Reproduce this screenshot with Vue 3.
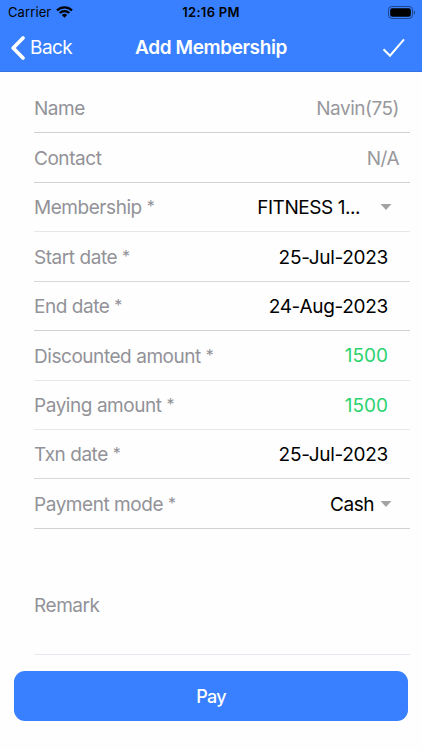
<script setup>
const rows = [
  { label: 'Name', value: 'Navin(75)', kind: 'muted', line: 'dark' },
  { label: 'Contact', value: 'N/A', kind: 'muted', line: 'dark' },
  { label: 'Membership', required: true, value: 'FITNESS 1...', kind: 'select', line: 'light', caret: true },
  { label: 'Start date', required: true, value: '25-Jul-2023', kind: 'date', line: 'soft' },
  { label: 'End date', required: true, value: '24-Aug-2023', kind: 'date', line: 'dark' },
  { label: 'Discounted amount', required: true, value: '1500', kind: 'amount', line: 'light' },
  { label: 'Paying amount', required: true, value: '1500', kind: 'amount', line: 'light' },
  { label: 'Txn date', required: true, value: '25-Jul-2023', kind: 'date', line: 'soft' },
  { label: 'Payment mode', required: true, value: 'Cash', kind: 'mode', line: 'dark', caret: true },
]
</script>

<template>
  <div class="screen">
    <header class="top">
      <div class="status">
        <div class="carrier">
          <span>Carrier</span>
          <svg class="wifi" viewBox="0 0 17 12" width="17" height="12">
            <path d="M1 4.4a10.7 10.7 0 0 1 15 0" />
            <path d="M3.7 7a6.9 6.9 0 0 1 9.6 0" />
            <path class="dot" d="M8.5 11.8 5.8 9.1a3.9 3.9 0 0 1 5.4 0z" />
          </svg>
        </div>
        <span class="clock">12:16 PM</span>
        <svg class="battery" viewBox="0 0 28 13" width="28" height="13">
          <rect class="shell" x=".5" y=".5" width="24" height="12" rx="3.4" />
          <rect x="2.2" y="2.2" width="20.6" height="8.6" rx="2" />
          <path class="cap" d="M25.8 4.5c1.8.5 1.8 3.5 0 4z" />
        </svg>
      </div>
      <nav class="nav">
        <button class="back">
          <svg viewBox="0 0 14 24" width="14" height="24"><path d="M12 2 2.2 12 12 22" /></svg>
          <span>Back</span>
        </button>
        <h1>Add Membership</h1>
        <button class="done" aria-label="Save">
          <svg viewBox="0 0 24 20" width="24" height="20"><path d="M1.5 11.3 8 17.7 22 1.3" /></svg>
        </button>
      </nav>
    </header>
    <main class="form">
      <div v-for="r in rows" :key="r.label" class="row" :class="[r.kind, r.line]">
        <span class="label" :class="{ required: r.required }">{{ r.label }}<template v-if="r.required">&nbsp;<span class="star">*</span></template></span>
        <span class="value">{{ r.value }}</span>
        <svg v-if="r.caret" class="caret" viewBox="0 0 12 6" width="12" height="6"><path d="M.5 0h11L6 6z" /></svg>
      </div>
      <div class="row remark"><span class="label">Remark</span></div>
    </main>
    <button class="pay">Pay</button>
  </div>
</template>

<style>
body { margin: 0; background: #fefefe; }
</style>

<style scoped>
.screen {
  box-sizing: border-box;
  width: 422px;
  height: 750px;
  overflow: hidden;
  background: #fefefe;
  font-family: Inter, "Liberation Sans", sans-serif;
  color: #000;
}
button { border: 0; padding: 0; background: none; color: #fff; font-family: inherit; }
svg { display: block; }
.top { height: 72px; box-sizing: border-box; background: #3880ff; border-bottom: 1px solid #3673e0; }
.status {
  display: grid;
  grid-template-columns: 1fr auto 1fr;
  align-items: center;
  height: 24px;
  padding: 0 6px 0 8px;
  font-size: 13px;
}
.carrier { display: flex; align-items: center; gap: 5px; letter-spacing: .1px; }
.wifi path { fill: none; stroke: #000; stroke-width: 2.2; }
.wifi .dot { fill: #000; stroke: none; }
.clock { font-weight: 600; letter-spacing: .3px; margin-left: -2px; }
.battery { justify-self: end; }
.shell { fill: none; stroke: #000; stroke-opacity: .45; }
.cap { fill: #000; fill-opacity: .45; }
.nav {
  display: grid;
  grid-template-columns: 1fr auto 1fr;
  align-items: center;
  height: 47px;
  padding: 0 11px;
}
.back { display: flex; align-items: center; gap: 5px; font-size: 19px; letter-spacing: -.55px; }
.back path { fill: none; stroke: #fff; stroke-width: 3.7; stroke-linecap: round; stroke-linejoin: round; }
h1 { margin: 0; color: #fff; font-size: 19px; font-weight: 600; letter-spacing: -.4px; }
.done { justify-self: end; margin-right: 5px; }
.done path { fill: none; stroke: #fff; stroke-width: 2; }
.form { padding: 11px 12px 0 34px; }
.row {
  box-sizing: border-box;
  display: flex;
  align-items: center;
  height: 50px;
  border-bottom: 1px solid #d2d2d4;
  padding-right: 22px;
  font-size: 19px;
  letter-spacing: -.3px;
}
.row:nth-child(3), .row:nth-child(5), .row:nth-child(7), .row:nth-child(8) { height: 49px; }
.row:nth-child(4) .value, .row:nth-child(8) .value, .row:nth-child(9) .value { padding-top: 1px; }
.row.light { border-bottom-color: #e7e7e8; }
.row.soft { border-bottom-color: #d9d9da; }
.label { color: #929298; white-space: nowrap; letter-spacing: -.45px; line-height: 24px; }
.label.required { padding-top: 2px; }
.star { display: inline-block; font-size: 16px; line-height: 15px; vertical-align: 2px; }
.value { margin-left: auto; white-space: nowrap; }
.row.muted { padding-top: 2px; padding-right: 11px; letter-spacing: -.5px; }
.muted .value { color: #98989c; }
.amount { letter-spacing: 0; }
.amount .value { color: #2dd36f; }
.select, .mode { padding-right: 18px; letter-spacing: -.45px; }
.select .caret { margin-left: 20px; }
.mode .caret { margin-left: 6px; }
.caret path { fill: #a3a3a3; }
.row.remark { height: 126px; padding-top: 28px; border-bottom-color: #e7e8ef; }
.pay {
  display: block;
  width: 394px;
  height: 50px;
  margin: 16px 14px 0;
  border-radius: 11px;
  background: #3880ff;
  font-size: 18px;
  font-weight: 500;
  letter-spacing: -.7px;
  padding-top: 1px;
}
</style>
